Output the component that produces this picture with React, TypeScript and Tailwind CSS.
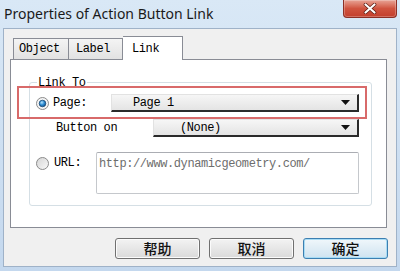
import React from "react";

const mono = { fontFamily: '"Liberation Mono", "DejaVu Sans Mono", monospace' };

function Radio({ checked }: { checked: boolean }) {
  return (
    <svg width="13" height="13" viewBox="0 0 13 13" className="shrink-0">
      <defs>
        <linearGradient id={checked ? "rg1" : "rg2"} x1="0" y1="0" x2="1" y2="1">
          <stop offset="0" stopColor="#d4d4d4" />
          <stop offset="1" stopColor="#fafafa" />
        </linearGradient>
        <radialGradient id="dot" cx="0.4" cy="0.35" r="0.7">
          <stop offset="0" stopColor="#b9e4fb" />
          <stop offset="0.5" stopColor="#2f8fd6" />
          <stop offset="1" stopColor="#0f4d86" />
        </radialGradient>
      </defs>
      <circle cx="6.5" cy="6.5" r="6" fill={checked ? "#f4f4f4" : `url(#rg2)`} stroke="#8a8a8a" strokeWidth="1" />
      {checked && <circle cx="6.5" cy="6.5" r="3.3" fill="url(#dot)" stroke="#1b4a75" strokeWidth="0.8" />}
    </svg>
  );
}

function Dropdown({ text, textPad }: { text: string; textPad: string }) {
  return (
    <div className="flex-1 h-[18px] flex items-center justify-between bg-linear-to-b from-[#f6f6f6] to-[#e4e4e4] border-l border-t border-[#e2e2e2] border-r-2 border-b-2 border-r-[#2a2a2a] border-b-[#2a2a2a]">
      <span className={`${textPad} text-[12px] tracking-[-0.4px] text-black leading-none`} style={mono}>
        {text}
      </span>
      <svg width="9" height="5" viewBox="0 0 9 5" className="mr-[7px]">
        <path d="M0 0 H9 L4.5 5 Z" fill="#111" />
      </svg>
    </div>
  );
}

function WinButton({ label, primary }: { label: string; primary?: boolean }) {
  return (
    <div
      className={`w-[85px] h-[21px] rounded-[3px] flex items-center justify-center text-[14px] font-medium text-[#111] border ${
        primary
          ? "border-[#3c7fb1] bg-linear-to-b from-[#f0f7fb] to-[#cfe3f0] shadow-[inset_0_0_0_1px_#a8dcf5]"
          : "border-[#707070] bg-linear-to-b from-[#f3f3f3] to-[#dadada] shadow-[inset_0_0_0_1px_#fbfbfb]"
      }`}
      style={{ fontFamily: '"Noto Sans CJK SC", "Noto Sans", sans-serif' }}
    >
      {label}
    </div>
  );
}

export default function App() {
  return (
    <div className="relative w-[400px] h-[271px] overflow-hidden flex flex-col bg-linear-to-b from-[#d9e8f6] to-[#c4d8ee]">
      {/* Title bar */}
      <div className="h-[28px] flex items-center pl-[4px] shrink-0">
        <span className="text-[14px] text-[#1a1a1a] leading-none" style={{ fontFamily: '"Noto Sans", "Open Sans", sans-serif' }}>
          Properties of Action Button Link
        </span>
      </div>
      <div className="absolute top-0 right-[3px] w-[54px] h-[18px] rounded-b-[4px] border border-t-0 border-[#8c2f25] bg-linear-to-b from-[#e7a396] via-[#d0533f] to-[#c23f2d] flex items-center justify-center shadow-[inset_0_0_0_1px_rgba(255,255,255,0.25)]">
        <svg width="14" height="11" viewBox="0 0 14 11">
          <path d="M2.5 1.5 L11.5 9.5 M11.5 1.5 L2.5 9.5" stroke="#5a1a12" strokeWidth="3.6" strokeLinecap="round" />
          <path d="M2.5 1.5 L11.5 9.5 M11.5 1.5 L2.5 9.5" stroke="#ffffff" strokeWidth="2.2" strokeLinecap="round" />
        </svg>
      </div>

      {/* Client area */}
      <div className="mx-[3px] h-[239px] bg-[#f0f0f0] border border-[#9fb2c8] flex flex-col">
        {/* Tabs */}
        <div className="mt-[7px] ml-[9px] h-[23px] flex items-end" style={mono}>
          <div className="w-[56px] h-[21px] border border-b-0 border-[#898c95] bg-linear-to-b from-[#f4f4f4] to-[#e2e2e2] flex items-center pl-[5px] text-[12px] tracking-[-0.4px] text-black">
            Object
          </div>
          <div className="w-[54px] h-[21px] border border-l-0 border-b-0 border-[#898c95] bg-linear-to-b from-[#f4f4f4] to-[#e2e2e2] flex items-center pl-[7px] text-[12px] tracking-[-0.4px] text-black">
            Label
          </div>
          <div className="relative z-10 -mb-px w-[60px] h-[24px] border border-l-0 border-b-0 border-[#898c95] bg-white flex items-start pt-[3px] pl-[9px] text-[12px] tracking-[-0.4px] text-black">
            Link
          </div>
        </div>

        {/* Pane */}
        <div className="ml-[6px] w-[377px] h-[169px] border border-[#898c95] bg-white pt-[22px] pl-[18px] pr-[14px]">
          <div className="relative h-[124px] border border-[#d5dfe5] rounded-[3px] pt-[11px] pl-[6px] pr-[12px]" style={mono}>
            <span className="absolute left-[7px] -top-[8px] bg-white px-[1px] text-[12px] tracking-[-0.4px] text-black leading-[16px]">
              Link To
            </span>

            {/* Row 1 */}
            <div className="flex items-center h-[18px]">
              <Radio checked />
              <span className="ml-[4px] w-[58px] text-[12px] tracking-[-0.4px] text-black leading-none">Page:</span>
              <Dropdown text="Page 1" textPad="pl-[21px]" />
            </div>

            {/* Row 2 */}
            <div className="flex items-center h-[18px] mt-[7px]">
              <span className="ml-[20px] w-[97px] text-[12px] tracking-[-0.4px] text-black leading-none">Button on</span>
              <Dropdown text="(None)" textPad="pl-[26px]" />
            </div>

            {/* Row 3 */}
            <div className="flex items-start mt-[15px]">
              <div className="flex items-center h-[22px]">
                <Radio checked={false} />
                <span className="ml-[5px] w-[42px] text-[12px] tracking-[-0.4px] text-black leading-none">URL:</span>
              </div>
              <div className="flex-1 h-[42px] bg-white border border-[#c5c8cc] border-t-[#abadb3] rounded-[2px] pl-[2px] pt-[4px] text-[12px] tracking-[-0.4px] text-[#6d6d6d] leading-[14px]">
                http://www.dynamicgeometry.com/
              </div>
            </div>
          </div>
        </div>

        {/* Buttons */}
        <div className="mt-[10px] flex justify-end gap-[9px] pr-[8px]">
          <WinButton label="帮助" />
          <WinButton label="取消" />
          <WinButton label="确定" primary />
        </div>
      </div>

      {/* Red highlight overlay */}
      <div className="absolute left-[17px] top-[86px] w-[350px] h-[33px] border-2 border-[#d86a6a] pointer-events-none" />
    </div>
  );
}
